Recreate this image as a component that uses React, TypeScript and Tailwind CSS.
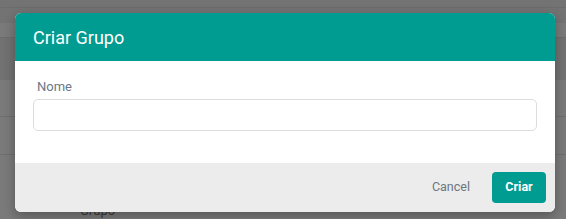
import React from 'react';

const Backdrop: React.FC = () => (
    <div className="absolute inset-0 flex flex-col bg-[#7a7a7a]">
        <div className="h-[8px] border-b border-[#6c6c6c] bg-[#737373]"></div>
        <div className="h-[16px] bg-[#737373]"></div>
        <div className="h-[16px] border-b border-[#6c6c6c]"></div>
        <div className="h-[44px] bg-[#727272]"></div>
        <div className="h-[38px] border-b border-[#6e6e6e]"></div>
        <div className="h-[40px] border-b border-[#6e6e6e]"></div>
        <div className="flex-1 pl-[80px] pt-[48px] text-[13px] leading-[16px] text-[#3a3a3a] font-['Roboto',sans-serif]">Grupo</div>
    </div>
);

const App: React.FC = () => {
    return (
        <div className="relative h-[219px] w-[566px] overflow-hidden font-['Roboto',sans-serif]">
            <Backdrop />
            <div className="relative pl-[15px] pt-[13px]">
                <div className="w-[540px] overflow-hidden rounded-[6px] bg-white shadow-[0_4px_12px_rgba(0,0,0,0.3)]">
                    {/* Header */}
                    <div className="flex h-[48px] items-center bg-[#009b91] px-[18px]">
                        <h2 className="text-[18px] font-normal text-white">Criar Grupo</h2>
                    </div>

                    {/* Body */}
                    <div className="px-[18px] pt-[17px] pb-[32px]">
                        <label className="block text-[13px] leading-[18px] text-[#6b7886] pl-[4px]">Nome</label>
                        <input
                            type="text"
                            className="mt-[3px] block h-[32px] w-[504px] rounded-[5px] border border-[#dcdcdc] bg-white px-3 text-[13px] outline-none"
                        />
                    </div>

                    {/* Footer */}
                    <div className="flex h-[49px] items-center justify-end gap-[22px] bg-[#ececec] px-[9px]">
                        <button className="text-[12.5px] text-[#6b7580]">Cancel</button>
                        <button className="h-[31px] w-[54px] rounded-[4px] bg-[#009b91] text-[12.5px] font-bold text-white">Criar</button>
                    </div>
                </div>
            </div>
        </div>
    );
};

export default App;
